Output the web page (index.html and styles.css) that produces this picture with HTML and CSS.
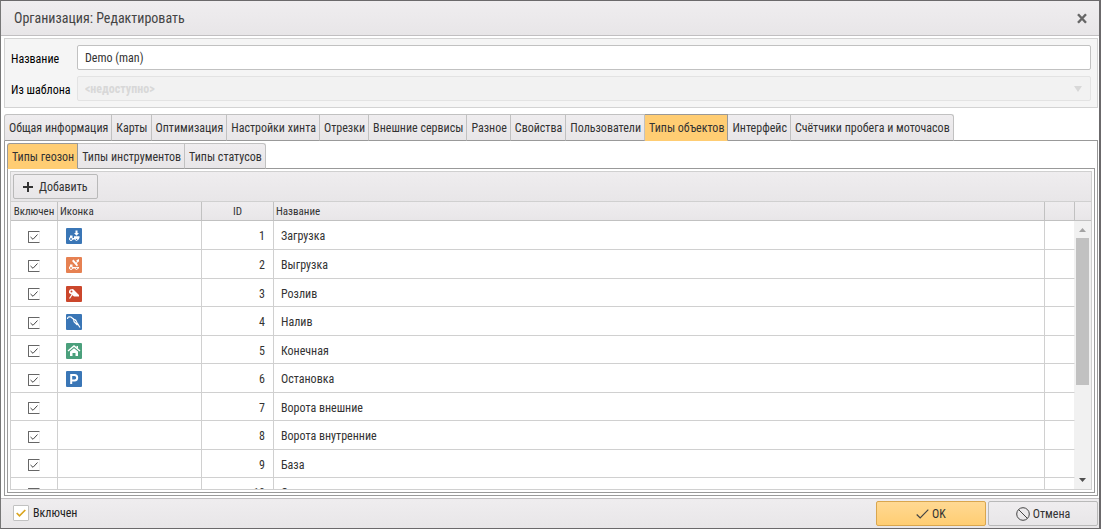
FILE: index.html
```html
<!DOCTYPE html>
<html lang="ru">
<head>
<meta charset="utf-8">
<title>Организация: Редактировать</title>
<link rel="stylesheet" href="styles.css">
</head>
<body>
<form class="window">
  <header class="titlebar">
    <h1 class="title">Организация: Редактировать</h1>
    <button type="button" class="close" aria-label="Закрыть">
      <svg width="10" height="11" viewBox="0 0 10 11"><path d="M1 1.2 9 9.8M9 1.2 1 9.8" stroke="#666" stroke-width="2.4"/></svg>
    </button>
  </header>

  <main class="content">
    <section class="fields">
      <label class="field-label" for="name">Название</label>
      <input class="field-input" id="name" type="text" value="Demo (man)">
      <label class="field-label" for="template">Из шаблона</label>
      <select class="field-input field-select" id="template" disabled><option>&lt;недоступно&gt;</option></select>
    </section>

    <nav class="tabs tabs-main">
      <button type="button" class="tab">Общая информация</button>
      <button type="button" class="tab">Карты</button>
      <button type="button" class="tab">Оптимизация</button>
      <button type="button" class="tab">Настройки хинта</button>
      <button type="button" class="tab">Отрезки</button>
      <button type="button" class="tab">Внешние сервисы</button>
      <button type="button" class="tab">Разное</button>
      <button type="button" class="tab">Свойства</button>
      <button type="button" class="tab">Пользователи</button>
      <button type="button" class="tab active">Типы объектов</button>
      <button type="button" class="tab">Интерфейс</button>
      <button type="button" class="tab">Счётчики пробега и моточасов</button>
    </nav>

    <section class="panel">
      <nav class="tabs">
        <button type="button" class="tab active">Типы геозон</button>
        <button type="button" class="tab">Типы инструментов</button>
        <button type="button" class="tab">Типы статусов</button>
      </nav>
      <section class="panel panel-inner">
        <div class="grid">
          <div class="toolbar">
            <button type="button" class="button add">
              <svg width="10" height="10" viewBox="0 0 10 10"><path d="M5 0V10M0 5H10" stroke="#333" stroke-width="2"/></svg>
              Добавить
            </button>
          </div>
          <div class="grid-body">
            <div class="table-wrap">
              <table class="table">
                <colgroup><col class="col-on"><col class="col-icon"><col class="col-id"><col><col class="col-extra"></colgroup>
                <thead>
                  <tr><th>Включен</th><th>Иконка</th><th class="center">ID</th><th>Название</th><th></th></tr>
                </thead>
                <tbody>
                  <tr><td><input type="checkbox" class="check" aria-label="Загрузка" checked></td><td><svg class="icon" viewBox="0 0 16 16"><rect width="16" height="16" rx="1" fill="#3a76b6"/><path d="M9.500 2.500h2V5H13l-2.500 2.800L8 5h1.500zM8 8.200h5.500v2H8zM4 7.500h2.500V10H13v1.500H3V9.800l1-.3z" fill="#fff"/><g fill="#3a76b6" stroke="#fff"><circle cx="5" cy="11" r="1.500"/><circle cx="10.500" cy="11.500" r="1"/></g></svg></td><td class="id">1</td><td>Загрузка</td><td></td></tr>
                  <tr><td><input type="checkbox" class="check" aria-label="Выгрузка" checked></td><td><svg class="icon" viewBox="0 0 16 16"><rect width="16" height="16" rx="1" fill="#e68152"/><path d="m6 4 1.500-1.500L12 8l-1 1.500zM10 6l1-2-1-.5 3-1.500V5l-1-.5-1 2zM4 7.500h2.500V10H13v1.500H3V9.800l1-.3z" fill="#fff"/><g fill="#e68152" stroke="#fff"><circle cx="5" cy="11" r="1.500"/><circle cx="10.500" cy="11.500" r="1"/></g></svg></td><td class="id">2</td><td>Выгрузка</td><td></td></tr>
                  <tr><td><input type="checkbox" class="check" aria-label="Розлив" checked></td><td><svg class="icon" viewBox="0 0 16 16"><rect width="16" height="16" rx="1" fill="#cb472c"/><path d="M4 3.500 7 3l1 1 5 5v1.500H8l-2.500-2L3 7V5z" fill="#fff"/><path d="M6.500 8 3.500 12.500" stroke="#fff" stroke-width="1.200"/><circle cx="5.500" cy="5.500" r="1" fill="#cb472c"/></svg></td><td class="id">3</td><td>Розлив</td><td></td></tr>
                  <tr><td><input type="checkbox" class="check" aria-label="Налив" checked></td><td><svg class="icon" viewBox="0 0 16 16"><rect width="16" height="16" rx="1" fill="#3a76b6"/><path d="M1.500 5C1.500 3 3 2.500 5 3L8 5.500M11.500 9.500 14 13.500" fill="none" stroke="#fff" stroke-width="1.200"/><path d="m7 4.500 3 1 2.500 5-1.500 1-3.500-3.500z" fill="#fff"/><path d="m8.500 6.500 1.500 2" stroke="#3a76b6"/></svg></td><td class="id">4</td><td>Налив</td><td></td></tr>
                  <tr><td><input type="checkbox" class="check" aria-label="Конечная" checked></td><td><svg class="icon" viewBox="0 0 16 16"><rect width="16" height="16" rx="1" fill="#4ba07c"/><path d="M2 8 8 3l6 5" fill="none" stroke="#fff" stroke-width="1.400"/><path d="M4 8.500 8 5.200l4 3.300V13H9.500v-3h-3v3H4zM10.500 3H12v2.500l-1.500-1z" fill="#fff"/></svg></td><td class="id">5</td><td>Конечная</td><td></td></tr>
                  <tr><td><input type="checkbox" class="check" aria-label="Остановка" checked></td><td><svg class="icon" viewBox="0 0 16 16"><rect width="16" height="16" rx="1" fill="#3a76b6"/><path d="M5.200 13V4h3.300a2.700 2.700 0 0 1 0 5.400H5.200" fill="none" stroke="#fff" stroke-width="2"/></svg></td><td class="id">6</td><td>Остановка</td><td></td></tr>
                  <tr><td><input type="checkbox" class="check" aria-label="Ворота внешние" checked></td><td></td><td class="id">7</td><td>Ворота внешние</td><td></td></tr>
                  <tr><td><input type="checkbox" class="check" aria-label="Ворота внутренние" checked></td><td></td><td class="id">8</td><td>Ворота внутренние</td><td></td></tr>
                  <tr><td><input type="checkbox" class="check" aria-label="База" checked></td><td></td><td class="id">9</td><td>База</td><td></td></tr>
                  <tr><td><input type="checkbox" class="check" aria-label="Стоянка" checked></td><td></td><td class="id">10</td><td>Стоянка</td><td></td></tr>
                </tbody>
              </table>
            </div>
            <div class="scroll">
              <div class="scroll-head"></div>
              <svg class="arrow" viewBox="0 0 17 17"><path d="m5 11 3.500-4 3.500 4z" fill="#a3a3a3"/></svg>
              <div class="track"><div class="thumb"></div></div>
              <svg class="arrow" viewBox="0 0 17 17"><path d="m5 6 3.500 4L12 6z" fill="#505050"/></svg>
            </div>
          </div>
        </div>
      </section>
    </section>
  </main>

  <footer class="footer">
    <label class="enabled"><input type="checkbox" class="check check-large" checked>Включен</label>
    <div class="actions">
      <button type="submit" class="button action primary">
        <svg width="13" height="10" viewBox="0 0 13 10"><path d="m.7 5.500 3.500 3.500L12.300.7" fill="none" stroke="#444" stroke-width="1.200"/></svg>
        OK
      </button>
      <button type="button" class="button action">
        <svg width="14" height="14" viewBox="0 0 14 14"><g fill="none" stroke="#444"><circle cx="7" cy="7" r="6.300"/><path d="m2.600 2.600 8.800 8.800"/></g></svg>
        Отмена
      </button>
    </div>
  </footer>
</form>
</body>
</html>
```
FILE: styles.css
```css
* { box-sizing: border-box; }

body {
  margin: 0;
  color: #333;
  font-family: "Roboto Condensed", "Liberation Sans Narrow", Roboto, sans-serif;
  font-size: 12px;
  line-height: 16px;
}

button, input, select { font: inherit; color: inherit; margin: 0; }
svg { display: block; flex: none; }

.window {
  display: flex;
  flex-direction: column;
  height: 100vh;
  border: 1px solid #6b696b;
  border-right-width: 2px;
  border-left-color: #777;
  background: #fff;
}

.titlebar {
  display: flex;
  align-items: center;
  justify-content: space-between;
  height: 35px;
  padding: 0 12px 0 13px;
  border-bottom: 1px solid #c1bfc1;
  background: linear-gradient(#efedef, #e8e6e8);
}
.title { margin: 0; font-size: 14px; line-height: 20px; font-weight: 400; color: #444; }
.close { padding: 0; border: 0; background: none; }

.content {
  display: flex;
  flex: 1;
  flex-direction: column;
  min-height: 0;
  padding: 2px 1px 2px 3px;
}

.fields {
  display: grid;
  grid-template-columns: 66px 1fr;
  align-items: center;
  row-gap: 6px;
  padding: 6px;
  border: 1px solid #d3d3d3;
  background: #f5f5f5;
}
.field-label { padding-top: 2px; color: #000; }
.field-input {
  width: 100%;
  height: 25px;
  padding: 1px 7px 0;
  border: 1px solid #c1c1c1;
  border-radius: 2px;
  background: #fff;
}
.field-select {
  appearance: none;
  border-color: #e3e3e3;
  background: #f2f2f2 url("data:image/svg+xml,%3Csvg xmlns='http://www.w3.org/2000/svg' width='8' height='6'%3E%3Cpath d='M0 0h8L4 6z' fill='%23d8d8d8'/%3E%3C/svg%3E") no-repeat right 8px center;
  color: #d8d8d8;
  font-weight: 700;
  opacity: 1;
}

.tabs { display: flex; flex: none; position: relative; margin-bottom: -1px; }
.tabs-main { margin-top: 6px; }
.tab {
  height: 26px;
  padding: 1px 3px 0 4px;
  border: 1px solid #c1c1c1;
  border-bottom-color: #999;
  border-left-width: 0;
  background: linear-gradient(#efedef, #e8e6e8);
  white-space: nowrap;
}
.tabs-main .tab { height: 27px; }
.tab:first-child { border-left-width: 1px; border-top-left-radius: 3px; }
.tab:last-child { border-top-right-radius: 3px; }
.tab.active { border-color: #999; border-bottom-color: #ffcd73; background: #ffcd73; }

.panel {
  display: flex;
  flex: 1;
  flex-direction: column;
  min-height: 0;
  padding: 2px;
  border: 1px solid #999;
}

.grid {
  display: flex;
  flex: 1;
  flex-direction: column;
  min-height: 0;
  border: 1px solid #d0d0d0;
}
.toolbar {
  flex: none;
  padding: 2px;
  border-bottom: 1px solid #d0d0d0;
  background: linear-gradient(#efedef, #e8e6e8);
}
.button {
  display: flex;
  align-items: center;
  justify-content: center;
  height: 25px;
  padding: 0 9px;
  border: 1px solid #b9b9b9;
  border-radius: 2px;
  background: linear-gradient(#efedef, #e8e6e8);
}
.add { gap: 6px; }

.grid-body { display: flex; flex: 1; min-height: 0; }
.table-wrap { flex: 1; min-width: 0; overflow: hidden; }
.table { width: 100%; table-layout: fixed; border-collapse: separate; border-spacing: 0; }
.col-on { width: 47px; }
.col-icon { width: 144px; }
.col-id { width: 72px; }
.col-extra { width: 30px; }
.table th {
  height: 19px;
  padding: 1px 2px 0;
  border-right: 1px solid #c1c1c1;
  border-bottom: 1px solid #c1c1c1;
  background: linear-gradient(#efedef, #e8e6e8);
  font-size: 11px;
  line-height: 16px;
  font-weight: 400;
  text-align: left;
}
.table th.center { text-align: center; }
.table td {
  height: 29px;
  padding: 2px 7px 0;
  border-right: 1px solid #d0d0d0;
  border-bottom: 1px solid #d0d0d0;
}
.table tr:nth-child(odd):not(:first-child) td { height: 28px; }
.table tr :first-child { text-align: center; }
.table tr :last-child { border-right-color: #f1f1f1; }
.table th:last-child { border-right-color: #c1c1c1; }
.table td.id { padding-right: 8px; text-align: right; }
.icon { width: 16px; height: 16px; margin-left: 1px; }

.check {
  display: block;
  appearance: none;
  width: 12px;
  height: 12px;
  margin: 1px auto 0;
  border: 1px solid #666;
  border-radius: 1px;
  background: #fff url("data:image/svg+xml,%3Csvg xmlns='http://www.w3.org/2000/svg' width='8' height='6'%3E%3Cpath d='M.5 3 3 5.300 7.500.5' fill='none' stroke='%23444'/%3E%3C/svg%3E") no-repeat center;
}

.scroll { display: flex; flex: none; flex-direction: column; width: 16px; background: #f1f1f1; }
.scroll-head { flex: none; height: 19px; border-bottom: 1px solid #c1c1c1; background: linear-gradient(#efedef, #e8e6e8); }
.arrow { width: 17px; height: 17px; margin-left: -1px; }
.track { flex: 1; min-height: 0; padding: 0 2px 0 1px; }
.thumb { height: 63%; background: #c1c1c1; }

.footer {
  display: flex;
  align-items: center;
  justify-content: space-between;
  height: 30px;
  padding: 0 1px 0 12px;
  border-top: 1px solid #c1bfc1;
  background: linear-gradient(#efedef, #e8e6e8);
}
.enabled { display: flex; align-items: center; gap: 4px; padding-bottom: 2px; color: #222; }
.check-large {
  width: 16px;
  height: 16px;
  margin: 0;
  border-color: #c1c1c1;
  background-image: url("data:image/svg+xml,%3Csvg xmlns='http://www.w3.org/2000/svg' width='10' height='8'%3E%3Cpath d='M.7 4 3.500 6.800 9.300 1' fill='none' stroke='%23daa520' stroke-width='1.700'/%3E%3C/svg%3E");
}
.actions { display: flex; gap: 2px; }
.action { width: 110px; gap: 3px; }
.primary { border-color: #d9a64e; background: linear-gradient(#ffd993, #ffcd73); }
```
